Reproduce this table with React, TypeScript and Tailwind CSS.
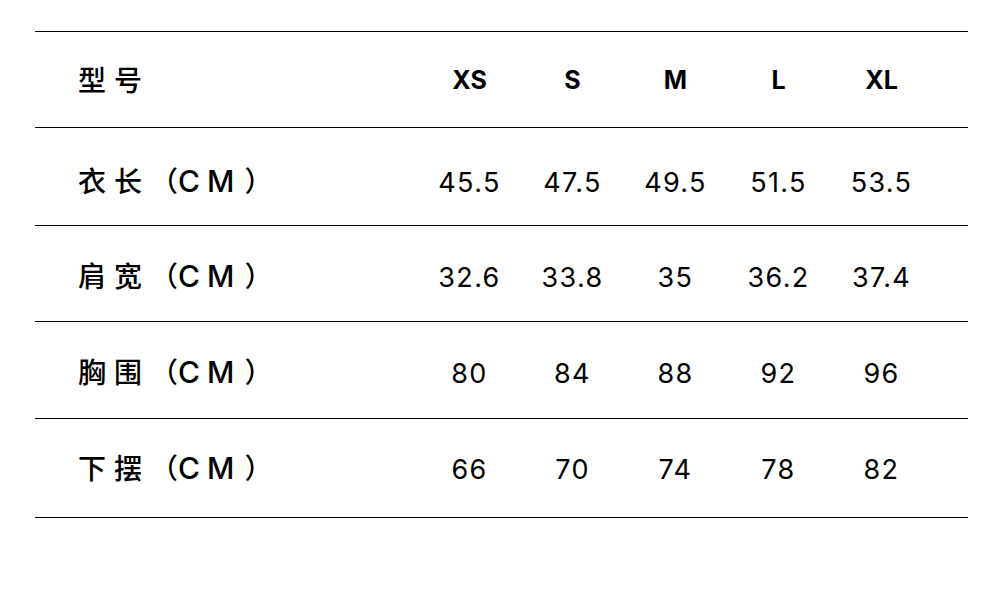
const sizes = ['XS', 'S', 'M', 'L', 'XL']

const rows = [
  { label: '衣长', cls: 'h-[98px] pt-[13px]', values: ['45.5', '47.5', '49.5', '51.5', '53.5'] },
  { label: '肩宽', cls: 'h-[96px] pt-[10px]', values: ['32.6', '33.8', '35', '36.2', '37.4'] },
  { label: '胸围', cls: 'h-[97px] pt-[8px]', values: ['80', '84', '88', '92', '96'] },
  { label: '下摆', cls: 'h-[99px] pt-[5px]', values: ['66', '70', '74', '78', '82'] },
]

function App() {
  return (
    <div className="min-h-screen bg-white pl-[35px] pr-[32px] pt-[31px] text-black font-['Inter','Noto_Sans_CJK_SC',sans-serif]">
      <div className="border-t border-black">
        {/* header */}
        <div className="grid h-[96px] grid-cols-[383px_repeat(5,103px)] items-center border-b border-black pt-[2px]">
          <div className="-mt-[4px] pl-[43px] font-['Noto_Sans_CJK_SC',sans-serif] text-[28px] font-medium tracking-[8px]">
            型号
          </div>
          {sizes.map((s) => (
            <div key={s} className="text-center text-[25px] font-bold">
              {s}
            </div>
          ))}
        </div>
        {rows.map((r) => (
          <div
            key={r.label}
            className={`grid ${r.cls} grid-cols-[383px_repeat(5,103px)] items-center border-b border-black`}
          >
            <div className="-mt-[4px] whitespace-nowrap pl-[43px] font-['Noto_Sans_CJK_SC',sans-serif] text-[28px] font-medium">
              <span className="tracking-[8px]">{r.label}</span>
              <span>（</span>
              <span className="font-['Inter',sans-serif] text-[30px] tracking-[7px]">C</span>
              <span className="mr-[10px] font-['Inter',sans-serif] text-[30px]">M</span>
              <span>）</span>
            </div>
            {r.values.map((v, i) => (
              <div key={i} className="text-center text-[27px] tracking-[0.05em]">
                {v}
              </div>
            ))}
          </div>
        ))}
      </div>
    </div>
  )
}

export default App
